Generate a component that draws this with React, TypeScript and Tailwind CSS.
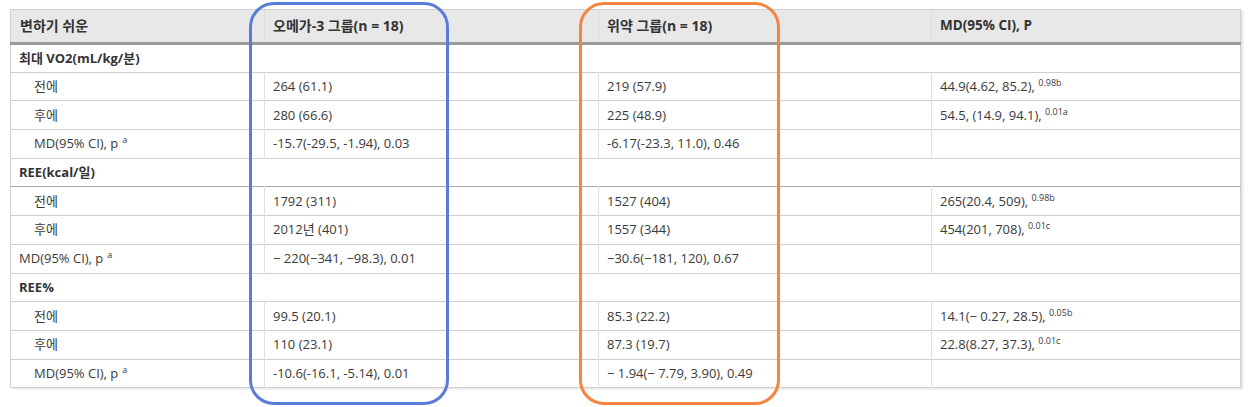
import React from "react";

type Row =
  | { kind: "section"; label: string; darkBottom?: boolean; darkTop?: boolean }
  | { kind: "data"; label: string; indent: boolean; a: string; b: string; c?: string; sup?: string; supA?: boolean };

const rows: Row[] = [
  { kind: "section", label: "최대 VO2(mL/kg/분)" },
  { kind: "data", label: "전에", indent: true, a: "264 (61.1)", b: "219 (57.9)", c: "44.9(4.62, 85.2), ", sup: "0.98b" },
  { kind: "data", label: "후에", indent: true, a: "280 (66.6)", b: "225 (48.9)", c: "54.5, (14.9, 94.1), ", sup: "0.01a" },
  { kind: "data", label: "MD(95% CI), p", supA: true, indent: true, a: "-15.7(-29.5, -1.94), 0.03", b: "-6.17(-23.3, 11.0), 0.46" },
  { kind: "section", label: "REE(kcal/일)", darkBottom: true },
  { kind: "data", label: "전에", indent: true, a: "1792 (311)", b: "1527 (404)", c: "265(20.4, 509), ", sup: "0.98b" },
  { kind: "data", label: "후에", indent: true, a: "2012년 (401)", b: "1557 (344)", c: "454(201, 708), ", sup: "0.01c" },
  { kind: "data", label: "MD(95% CI), p", supA: true, indent: false, a: "− 220(−341, −98.3), 0.01", b: "−30.6(−181, 120), 0.67" },
  { kind: "section", label: "REE%", darkTop: true },
  { kind: "data", label: "전에", indent: true, a: "99.5 (20.1)", b: "85.3 (22.2)", c: "14.1(− 0.27, 28.5), ", sup: "0.05b" },
  { kind: "data", label: "후에", indent: true, a: "110 (23.1)", b: "87.3 (19.7)", c: "22.8(8.27, 37.3), ", sup: "0.01c" },
  { kind: "data", label: "MD(95% CI), p", supA: true, indent: true, a: "-10.6(-16.1, -5.14), 0.01", b: "− 1.94(− 7.79, 3.90), 0.49" },
];

const font = { fontFamily: '"Open Sans", "Noto Sans CJK KR", sans-serif' };

export default function App() {
  return (
    <div className="relative w-[1253px] h-[407px] bg-white text-[#3a3a3a]" style={font}>
      <div className="pt-[9px] pl-[10px]">
        <table className="w-[1230px] table-fixed border-collapse text-[13px] leading-none border border-[#d0d0d0] shadow-[2px_1px_2px_rgba(0,0,0,0.12)]">
          <colgroup>
            <col className="w-[254px]" />
            <col className="w-[334px]" />
            <col className="w-[333px]" />
            <col className="w-[309px]" />
          </colgroup>
          <thead>
            <tr className="h-[34px] bg-[#e8e8e8] border-b-[3px] border-[#999] text-[#333]">
              <th className="text-left font-bold px-[9px] align-middle text-[14px]">변하기 쉬운</th>
              <th className="text-left font-bold px-[8px] align-middle border-l border-[#dcdcdc] text-[14px]">오메가-3 그룹(n = 18)</th>
              <th className="text-left font-bold px-[8px] align-middle border-l border-[#dcdcdc] text-[14px]">위약 그룹(n = 18)</th>
              <th className="text-left font-bold px-[8px] align-middle border-l border-[#dcdcdc] text-[13.5px]">MD(95% CI), P</th>
            </tr>
          </thead>
          <tbody>
            {rows.map((r, i) =>
              r.kind === "section" ? (
                <tr
                  key={i}
                  className={
                    "h-[28.7px] border-b " +
                    (r.darkBottom ? "border-b-[#aaa] " : "border-b-[#cfcfcf] ") +
                    (r.darkTop ? "border-t border-t-[#aaa]" : "")
                  }
                >
                  <td colSpan={4} className="px-[8px] font-bold align-middle text-[#333]">
                    {r.label}
                  </td>
                </tr>
              ) : (
                <tr key={i} className="h-[28.7px] border-b border-[#cfcfcf]">
                  <td className={"align-middle " + (r.indent ? "pl-[23px]" : "pl-[8px]")}>
                    {r.label}
                    <>{r.supA && <span className="text-[9px] ml-[4px] relative -top-[5px]">a</span>}</>
                  </td>
                  <td className="px-[8px] align-middle border-l border-[#e0e0e0]">{r.a}</td>
                  <td className="px-[8px] align-middle border-l border-[#e0e0e0]">{r.b}</td>
                  <td className="px-[8px] align-middle border-l border-[#e0e0e0]">
                    {r.c}
                    {r.sup && <span className="text-[9px] relative -top-[5px]">{r.sup}</span>}
                  </td>
                </tr>
              )
            )}
          </tbody>
        </table>
      </div>
      <div className="absolute left-[249px] top-[2px] w-[200px] h-[403px] rounded-[25px] border-[3px] border-[#5a7bd6] pointer-events-none" />
      <div className="absolute left-[579px] top-[2px] w-[201px] h-[403px] rounded-[25px] border-[3px] border-[#f5843f] pointer-events-none" />
    </div>
  );
}
